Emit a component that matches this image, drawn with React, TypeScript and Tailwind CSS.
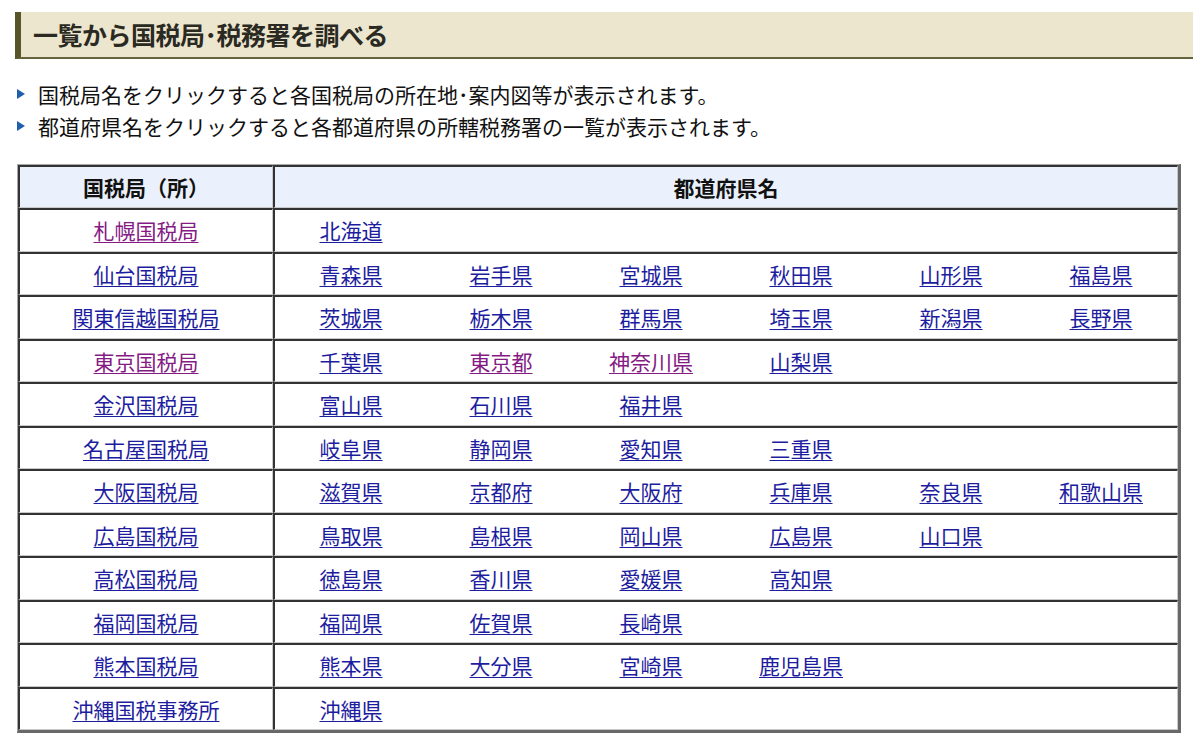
import React from "react";

type Item = { name: string; visited?: boolean };
type Row = { bureau: Item; prefs: Item[] };

const rows: Row[] = [
  { bureau: { name: "札幌国税局", visited: true }, prefs: [{ name: "北海道" }] },
  {
    bureau: { name: "仙台国税局" },
    prefs: [{ name: "青森県" }, { name: "岩手県" }, { name: "宮城県" }, { name: "秋田県" }, { name: "山形県" }, { name: "福島県" }],
  },
  {
    bureau: { name: "関東信越国税局" },
    prefs: [{ name: "茨城県" }, { name: "栃木県" }, { name: "群馬県" }, { name: "埼玉県" }, { name: "新潟県" }, { name: "長野県" }],
  },
  {
    bureau: { name: "東京国税局", visited: true },
    prefs: [{ name: "千葉県" }, { name: "東京都", visited: true }, { name: "神奈川県", visited: true }, { name: "山梨県" }],
  },
  { bureau: { name: "金沢国税局" }, prefs: [{ name: "富山県" }, { name: "石川県" }, { name: "福井県" }] },
  { bureau: { name: "名古屋国税局" }, prefs: [{ name: "岐阜県" }, { name: "静岡県" }, { name: "愛知県" }, { name: "三重県" }] },
  {
    bureau: { name: "大阪国税局" },
    prefs: [{ name: "滋賀県" }, { name: "京都府" }, { name: "大阪府" }, { name: "兵庫県" }, { name: "奈良県" }, { name: "和歌山県" }],
  },
  {
    bureau: { name: "広島国税局" },
    prefs: [{ name: "鳥取県" }, { name: "島根県" }, { name: "岡山県" }, { name: "広島県" }, { name: "山口県" }],
  },
  { bureau: { name: "高松国税局" }, prefs: [{ name: "徳島県" }, { name: "香川県" }, { name: "愛媛県" }, { name: "高知県" }] },
  { bureau: { name: "福岡国税局" }, prefs: [{ name: "福岡県" }, { name: "佐賀県" }, { name: "長崎県" }] },
  { bureau: { name: "熊本国税局" }, prefs: [{ name: "熊本県" }, { name: "大分県" }, { name: "宮崎県" }, { name: "鹿児島県" }] },
  { bureau: { name: "沖縄国税事務所" }, prefs: [{ name: "沖縄県" }] },
];

function Link({ item }: { item: Item }) {
  return (
    <a
      href="#"
      className={
        "underline decoration-1 underline-offset-[3px] " +
        (item.visited ? "text-[#851b84]" : "text-[#1d1da0]")
      }
    >
      {item.name}
    </a>
  );
}

const cellBorder = "border-t-2 border-l-2 border-t-[#333] border-l-[#333] border-r border-b border-r-[#c8c8c8] border-b-[#c8c8c8]";

export default function App() {
  return (
    <div
      className="w-[1200px] h-[754px] bg-white overflow-hidden text-[#222]"
      style={{ fontFamily: '"Noto Sans CJK JP", "Noto Sans", sans-serif' }}
    >
      <div className="pt-[12px] pl-[15px] pr-[7px]">
        <div className="h-[47px] bg-[#ede6cf] border-l-[6px] border-l-[#58552b] border-b-2 border-b-[#66643f] flex items-center pl-[12px]">
          <h1 className="text-[25px] font-bold text-[#2a2a22] leading-none tracking-[-0.5px]">一覧から国税局･税務署を調べる</h1>
        </div>
      </div>

      <ul className="mt-[19px] pl-[17px] text-[21px] leading-[32px] text-[#111]">
        <li className="flex items-center">
          <span className="w-0 h-0 border-t-[5px] border-b-[5px] border-l-[8px] border-t-transparent border-b-transparent border-l-[#1f5fae] mr-[13px]" />
          国税局名をクリックすると各国税局の所在地･案内図等が表示されます。
        </li>
        <li className="flex items-center">
          <span className="w-0 h-0 border-t-[5px] border-b-[5px] border-l-[8px] border-t-transparent border-b-transparent border-l-[#1f5fae] mr-[13px]" />
          都道府県名をクリックすると各都道府県の所轄税務署の一覧が表示されます。
        </li>
      </ul>

      <div className="pl-[17px] mt-[22px]">
        <table
          className="w-[1164px] border-separate border-spacing-0 border-t border-l border-t-[#a8a8a8] border-l-[#a8a8a8] border-r-[3px] border-b-[3px] border-r-[#686868] border-b-[#686868] text-[21px] leading-none"
        >
          <thead>
            <tr className="h-[43px] bg-[#ebf1fc]">
              <th className={"w-[255px] font-bold text-[#111] " + cellBorder}>国税局（所）</th>
              <th className={"font-bold text-[#111] " + cellBorder}>都道府県名</th>
            </tr>
          </thead>
          <tbody>
            {rows.map((r, i) => (
              <tr key={r.bureau.name} className={i % 2 === 0 ? "h-[44px]" : "h-[43px]"}>
                <td className={"text-center " + cellBorder}>
                  <Link item={r.bureau} />
                </td>
                <td className={"pl-[1px] " + cellBorder}>
                  <div className="flex">
                    {r.prefs.map((p) => (
                      <div key={p.name} className="w-[150px] text-center">
                        <Link item={p} />
                      </div>
                    ))}
                  </div>
                </td>
              </tr>
            ))}
          </tbody>
        </table>
      </div>
    </div>
  );
}
